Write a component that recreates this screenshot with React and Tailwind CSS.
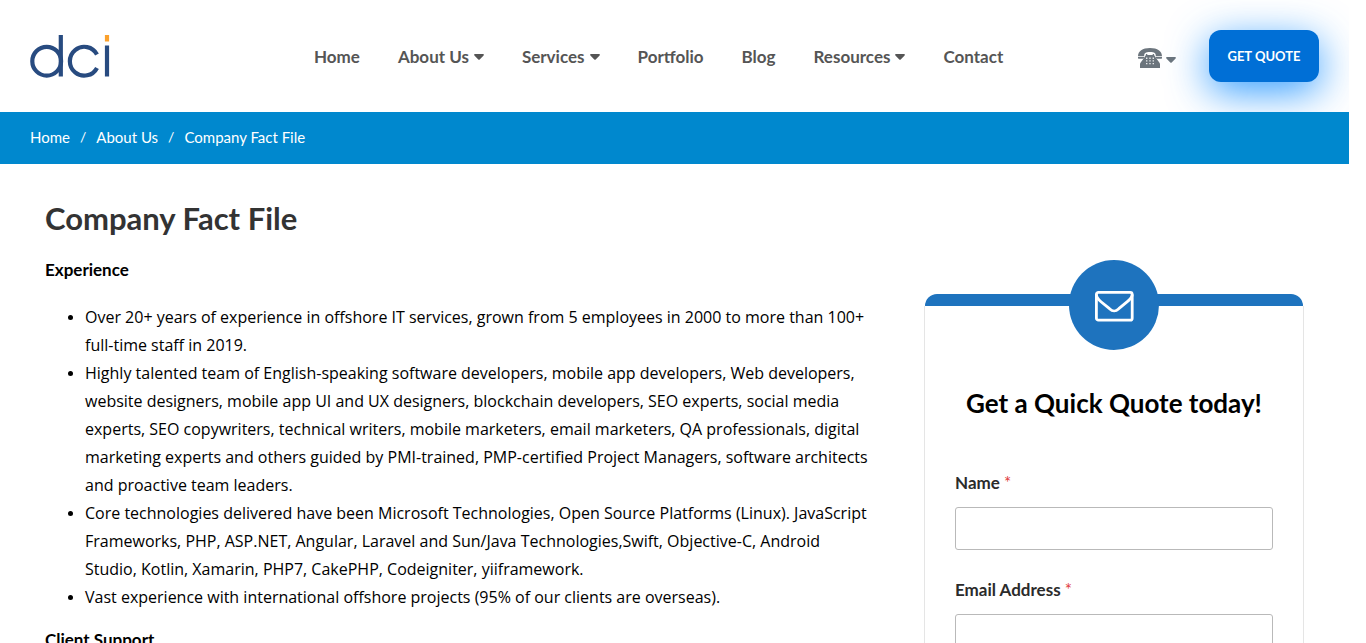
const navItems = [
  { label: "Home" },
  { label: "About Us", menu: true },
  { label: "Services", menu: true },
  { label: "Portfolio" },
  { label: "Blog" },
  { label: "Resources", menu: true },
  { label: "Contact" },
];

const experience = [
  "Over 20+ years of experience in offshore IT services, grown from 5 employees in 2000 to more than 100+ full-time staff in 2019.",
  "Highly talented team of English-speaking software developers, mobile app developers, Web developers, website designers, mobile app UI and UX designers, blockchain developers, SEO experts, social media experts, SEO copywriters, technical writers, mobile marketers, email marketers, QA professionals, digital marketing experts and others guided by PMI-trained, PMP-certified Project Managers, software architects and proactive team leaders.",
  "Core technologies delivered have been Microsoft Technologies, Open Source Platforms (Linux). JavaScript Frameworks, PHP, ASP.NET, Angular, Laravel and Sun/Java Technologies,Swift, Objective-C, Android Studio, Kotlin, Xamarin, PHP7, CakePHP, Codeigniter, yiiframework.",
  "Vast experience with international offshore projects (95% of our clients are overseas).",
];

function Caret() {
  return (
    <svg viewBox="0 0 10 6" className="h-1.5 w-2.5" fill="currentColor" aria-hidden="true">
      <path d="M1 0h8c.9 0 1.200.8.6 1.400L5.700 5.500c-.4.400-1 .400-1.400 0L.4 1.400C-.2.800.1 0 1 0z" />
    </svg>
  );
}

function Logo() {
  return (
    <svg viewBox="0 0 80 44" className="h-11 w-20" fill="none" stroke="#284b80" strokeWidth="4.200" aria-label="dci">
      <circle cx="16.700" cy="26.200" r="14.400" />
      <path d="M30.800 0v41.500" />
      <path d="M67 19.500A14.400 14.400 0 1 0 67 32.900" />
      <path d="M77 10.500v31" />
      <path d="M77 0v6.500" stroke="#fba12c" />
    </svg>
  );
}

function Phone() {
  return (
    <svg viewBox="0 0 24 20" className="h-5 w-6" fill="#6c757d" aria-hidden="true">
      <path d="M0 8.200C0 3.200 4.500 0 12 0s12 3.200 12 8.200H17.800C18 5.200 16.500 4 12 4S6 5.200 6.200 8.200z" />
      <path d="M0 9.100h6v.8c0 .5-.3.800-.8.800H1C.3 10.700 0 10.300 0 9.900zM18 9.100h6v.8c0 .4-.3.800-1 .8h-4.200c-.5 0-.8-.3-.8-.8z" />
      <path d="M7.900 6h1.400v1h5.400V6h1.400v1l2.300 3.500 3.100 4.200c.3.400.5.900.5 1.500V20H2v-3.800c0-.6.2-1.100.5-1.500l3.100-4.200L7.900 7z" />
      <path d="M8.700 9.500v6.800M12 9.500v6.800M15.300 9.500v6.800" stroke="#e8eaec" strokeWidth="1.400" strokeDasharray="1.400 1.300" />
    </svg>
  );
}

function Field({ id, label, type }) {
  return (
    <div>
      <label htmlFor={id} className="mb-2.5 block font-[Lato,sans-serif] text-[17px] leading-7 font-bold text-[#2b2b2b]">
        {label} <span className="font-normal text-[#e03c3c]">*</span>
      </label>
      <input id={id} type={type} required className="block h-[43px] w-full rounded-[3px] border border-[#b9b9b9] bg-white px-3 shadow-none outline-none" />
    </div>
  );
}

export default function App() {
  return (
    <div className="h-screen overflow-hidden bg-white pr-[17px] font-['Open_Sans',sans-serif] text-base leading-7 text-black">
      <div className="overflow-hidden">
        <header className="flex h-28 items-center justify-between px-[30px] font-[Lato,sans-serif]">
          <div className="flex items-center gap-[204px] pt-0.5">
            <a href="#home" aria-label="dci home">
              <Logo />
            </a>
            <nav>
              <ul className="flex gap-[38px] text-[17px] font-bold text-[#555]">
                {navItems.map((item) => (
                  <li key={item.label}>
                    <a href="#nav" className="flex items-center gap-[5px] whitespace-nowrap">
                      {item.label}
                      {item.menu && <Caret />}
                    </a>
                  </li>
                ))}
              </ul>
            </nav>
          </div>
          <div className="flex items-center gap-[33px]">
            <button type="button" aria-label="Call us" className="flex items-center gap-1 pt-1 text-[#6c757d]">
              <Phone />
              <span className="pt-1">
                <Caret />
              </span>
            </button>
            <button
              type="button"
              className="h-[52px] min-w-[110px] rounded-xl bg-[#006fd6] px-4 text-[13px] font-bold text-white shadow-[0_10px_40px_#0084ffcc]"
            >
              GET QUOTE
            </button>
          </div>
        </header>
        <nav aria-label="Breadcrumb" className="relative bg-[#0088ce] px-[30px] pt-[11px] pb-[13px] font-[Lato,sans-serif] text-[15px] leading-7 text-white">
          <ol className="flex">
            <li><a href="#home">Home</a></li>
            <li className="px-2.5 text-sm leading-7" aria-hidden="true">/</li>
            <li><a href="#about">About Us</a></li>
            <li className="px-2.5 text-sm leading-7" aria-hidden="true">/</li>
            <li aria-current="page">Company Fact File</li>
          </ol>
        </nav>
      </div>

      <main className="grid grid-cols-[829fr_380fr] gap-[50px] px-[45px] pt-9">
        <article>
          <h1 className="mb-5 font-[Lato,sans-serif] text-[31px] leading-9 font-bold text-[#333]">Company Fact File</h1>
          <h2 className="mb-[19px] font-[Lato,sans-serif] text-[17px] leading-7 font-bold">Experience</h2>
          <ul className="mb-[15px] list-disc pl-10 marker:text-sm">
            {experience.map((text) => (
              <li key={text}>{text}</li>
            ))}
          </ul>
          <h2 className="font-[Lato,sans-serif] text-[17px] leading-7 font-bold">Client Support</h2>
        </article>

        <aside className="pt-[94px]">
          <div className="mx-px h-3 rounded-t-xl bg-[#1e73be]" />
          <form className="flow-root border-x border-b border-[#e5e5e5] px-[30px] pb-8">
            <div className="mx-auto -mt-[46px] flex size-[90px] items-center justify-center rounded-full bg-[#1e73be] pt-px">
              <svg viewBox="0 0 40 32" className="h-8 w-10" fill="none" stroke="#fff" strokeWidth="2.800" strokeLinejoin="round" aria-hidden="true">
                <rect x="2.400" y="2.400" width="35.800" height="27.800" rx="2" />
                <path d="M2.400 4.500c0 3 2 5 4.600 7.200l8.500 7c3.400 3.200 5.900 3.200 9.300 0l8.500-7c2.600-2.200 4.900-4.200 4.900-7.200" />
              </svg>
            </div>
            <h2 className="mt-[35px] mb-12 text-center font-[Lato,sans-serif] text-[26px] leading-9 font-bold">Get a Quick Quote today!</h2>
            <div className="flex flex-col gap-[26px]">
              <Field id="name" label="Name" type="text" />
              <Field id="email" label="Email Address" type="email" />
            </div>
          </form>
        </aside>
      </main>
    </div>
  );
}
